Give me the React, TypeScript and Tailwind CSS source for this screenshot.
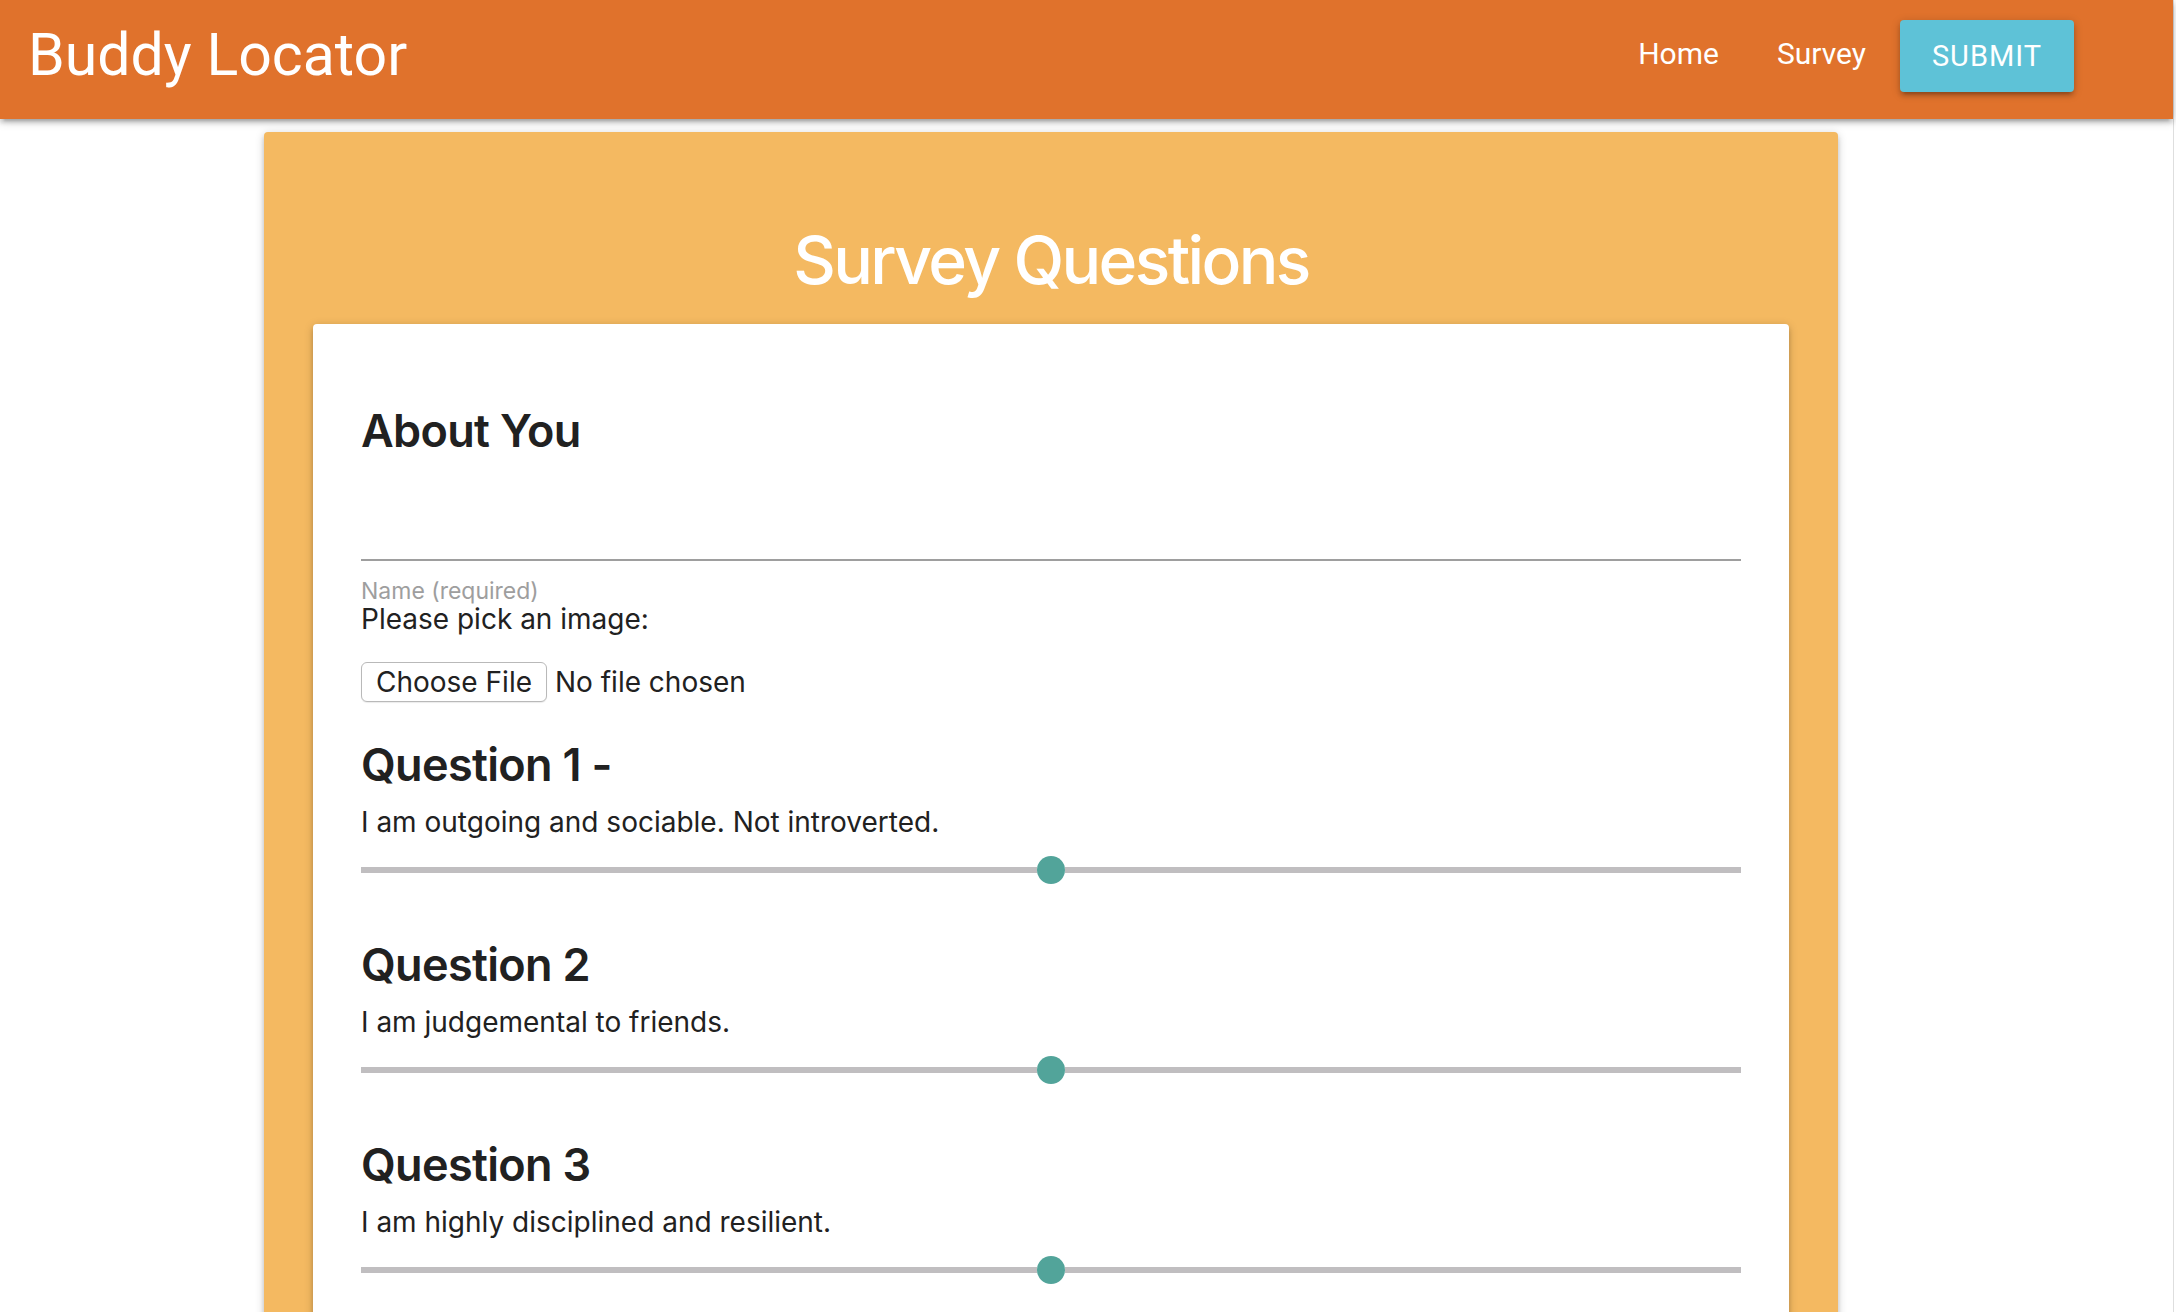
import React from "react";

const questions = [
  { title: "Question 1 -", text: "I am outgoing and sociable. Not introverted." },
  { title: "Question 2", text: "I am judgemental to friends." },
  { title: "Question 3", text: "I am highly disciplined and resilient." },
];

function Slider() {
  return (
    <div className="mt-[20px] flex h-[28px] items-center">
      <div className="h-[6px] flex-1 bg-[#c0bec0]" />
      <div className="h-[28px] w-[28px] shrink-0 rounded-full bg-[#52a49a]" />
      <div className="h-[6px] flex-1 bg-[#c0bec0]" />
    </div>
  );
}

export default function App() {
  return (
    <div className="flex h-[1312px] overflow-hidden bg-white font-['Inter',sans-serif] text-[#212121]">
      <div className="min-w-0 flex-1">
        <nav className="relative z-10 flex h-[119px] items-start justify-between bg-[#e0722c] font-['Roboto',sans-serif] text-white shadow-[0_4px_4px_0_rgba(0,0,0,0.14),0_6px_2px_-4px_rgba(0,0,0,0.12),0_2px_10px_0_rgba(0,0,0,0.2)]">
          <div className="ml-[28px] mt-[25px] text-[59px] leading-none">Buddy Locator</div>
          <div className="mr-[99px] flex items-start">
            <span className="mt-[39px] text-[30px] leading-none">Home</span>
            <span className="ml-[58px] mt-[39px] text-[30px] leading-none">Survey</span>
            <span className="ml-[34px] mt-[20px] flex h-[72px] w-[174px] items-center justify-center rounded-[4px] bg-[#5ec2d7] text-[29px] leading-none tracking-[1px] shadow-[0_4px_4px_0_rgba(0,0,0,0.14),0_6px_2px_-4px_rgba(0,0,0,0.12),0_2px_10px_0_rgba(0,0,0,0.2)]">
              SUBMIT
            </span>
          </div>
        </nav>

        <main className="ml-[264px] mt-[13px] w-[1574px] rounded-[4px] bg-[#f4b961] px-[49px] pb-[60px] pt-[95px] shadow-[0_4px_4px_0_rgba(0,0,0,0.14),0_6px_2px_-4px_rgba(0,0,0,0.12),0_2px_10px_0_rgba(0,0,0,0.2)]">
          <h1 className="text-center text-[66px] font-medium leading-none tracking-[-0.04em] text-white">
            Survey Questions
          </h1>

          <section className="mt-[31px] rounded-[4px] bg-white px-[48px] pb-[60px] pt-[84px] shadow-[0_4px_4px_0_rgba(0,0,0,0.14),0_6px_2px_-4px_rgba(0,0,0,0.12),0_2px_10px_0_rgba(0,0,0,0.2)]">
            <h2 className="text-[45px] font-semibold leading-none tracking-[-0.015em]">About You</h2>

            <div className="h-[108px] border-b-2 border-[#9e9e9e]" />
            <div className="mt-[19px] text-[23px] leading-none text-[#9e9e9e]">Name (required)</div>
            <div className="mt-[2px] text-[28px] leading-none">Please pick an image:</div>

            <div className="mt-[29px] flex items-center">
              <span className="flex h-[40px] items-center rounded-[6px] border border-[#b9b9b9] bg-white px-[14px] text-[28px] leading-none shadow-[0_1px_1px_rgba(0,0,0,0.08)]">
                Choose File
              </span>
              <span className="ml-[8px] text-[28px] leading-none">No file chosen</span>
            </div>

            {questions.map((q, i) => (
              <div key={q.title} className={i === 0 ? "mt-[40px]" : "mt-[58px]"}>
                <h3 className="text-[45px] font-semibold leading-none tracking-[-0.015em]">{q.title}</h3>
                <p className="mt-[21px] text-[28px] leading-none">{q.text}</p>
                <Slider />
              </div>
            ))}
          </section>
        </main>
      </div>
      <div className="w-[3px] shrink-0 border-l border-[#dedede] bg-white" />
    </div>
  );
}
